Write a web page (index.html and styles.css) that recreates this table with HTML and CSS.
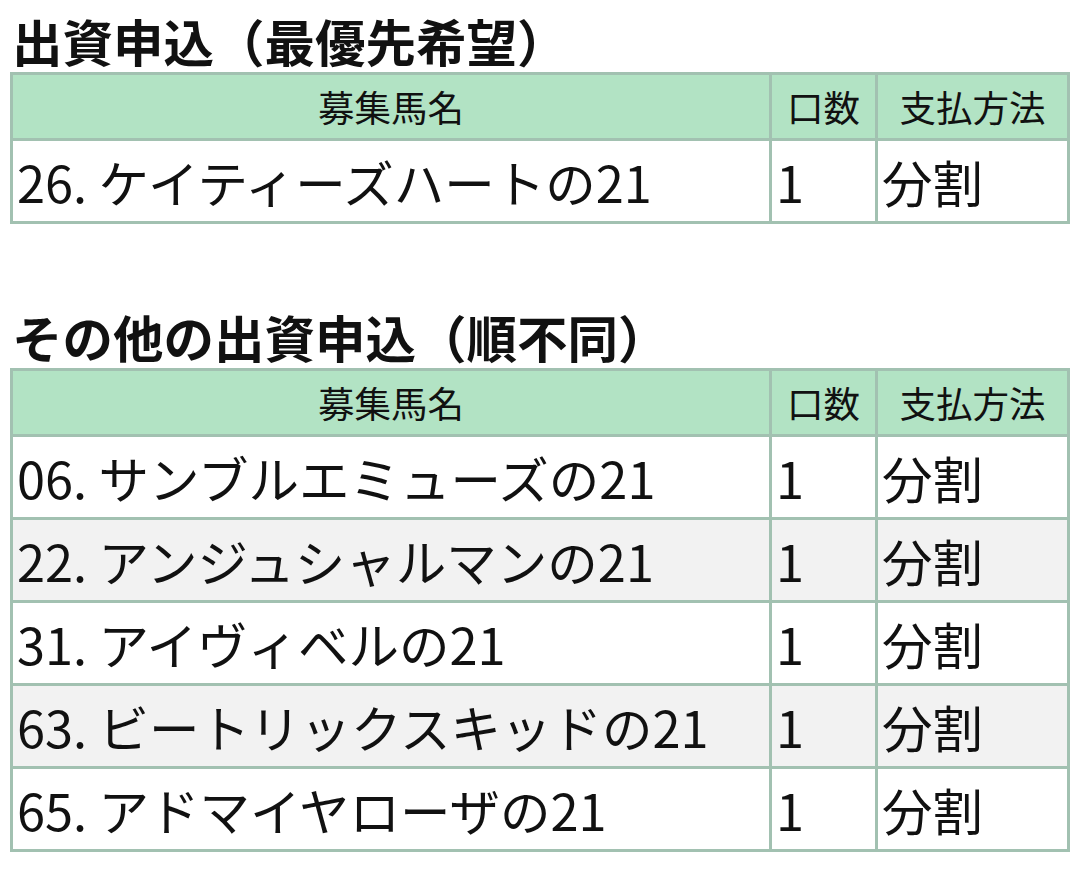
FILE: index.html
```html
<!DOCTYPE html>
<html lang="ja">
<head>
<meta charset="utf-8">
<link rel="stylesheet" href="styles.css">
</head>
<body>
<h2 class="title">出資申込（最優先希望）</h2>
<table class="apply">
  <thead>
    <tr><th class="c-name">募集馬名</th><th class="c-num">口数</th><th class="c-pay">支払方法</th></tr>
  </thead>
  <tbody>
    <tr><td>26. ケイティーズハートの21</td><td>1</td><td>分割</td></tr>
  </tbody>
</table>
<h2 class="title second">その他の出資申込（順不同）</h2>
<table class="apply">
  <thead>
    <tr><th class="c-name">募集馬名</th><th class="c-num">口数</th><th class="c-pay">支払方法</th></tr>
  </thead>
  <tbody>
    <tr><td>06. サンブルエミューズの21</td><td>1</td><td>分割</td></tr>
    <tr><td>22. アンジュシャルマンの21</td><td>1</td><td>分割</td></tr>
    <tr><td>31. アイヴィベルの21</td><td>1</td><td>分割</td></tr>
    <tr><td>63. ビートリックスキッドの21</td><td>1</td><td>分割</td></tr>
    <tr><td>65. アドマイヤローザの21</td><td>1</td><td>分割</td></tr>
  </tbody>
</table>
</body>
</html>
```
FILE: styles.css
```css
html, body {
  background: #ffffff;
}
body {
  margin: 0 10px;
  font-family: "Noto Sans CJK JP", "Noto Sans", sans-serif;
  color: #111111;
}
.title {
  margin: 8px 0 0 0;
  font-size: 50.5px;
  font-weight: 700;
  line-height: 64px;
  padding-left: 2px;
}
.title.second {
  margin-top: 80px;
}
.apply {
  width: 1060px;
  border-collapse: collapse;
  table-layout: fixed;
  border: 3px solid #a2c1b1;
}
.apply th, .apply td {
  border: 3px solid #a2c1b1;
  padding: 0 4px;
  text-align: left;
  vertical-align: middle;
}
.apply th {
  background: #b2e3c4;
  font-size: 36.5px;
  font-weight: 400;
  height: 63px;
  line-height: 44px;
  text-align: center;
}
.apply td {
  font-size: 50.5px;
  height: 80px;
  line-height: 60px;
}
.apply tbody tr:nth-child(even) td {
  background: #f2f2f2;
}
.c-num { width: 95px; }
.c-pay { width: 181px; }
```
